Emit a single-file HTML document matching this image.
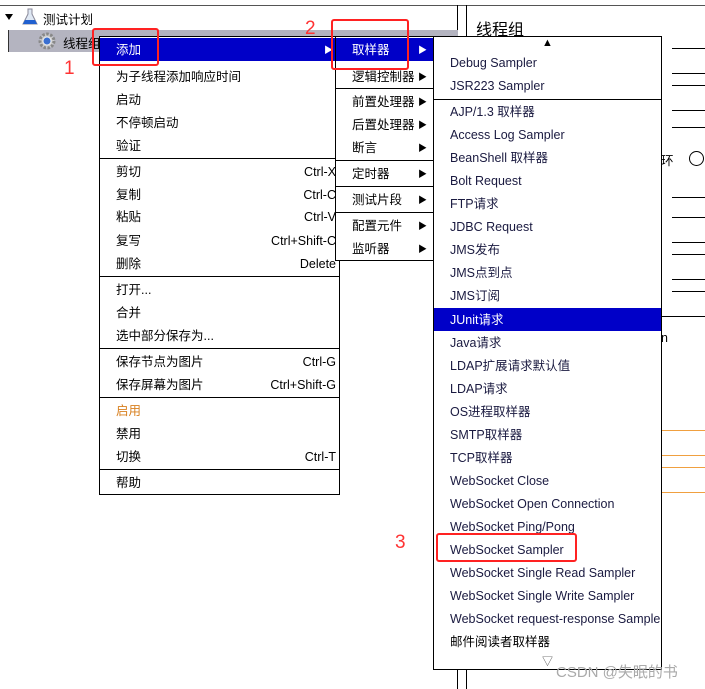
<!DOCTYPE html>
<html><head><meta charset="utf-8"><style>
*{margin:0;padding:0;box-sizing:border-box}
body{width:705px;height:689px;position:relative;overflow:hidden;background:#fff;font-family:"Liberation Sans","Noto Sans CJK SC",sans-serif;font-size:12.5px;color:#000}
.a{position:absolute}
.hl{position:absolute;left:672px;height:1px;background:#000;width:33px}
.ol{position:absolute;left:661px;height:1px;background:#f0a040;width:44px}
.m{position:absolute;background:#fff;border:1px solid #000}
.it{position:absolute;left:0;right:0;height:23px;line-height:24px;white-space:nowrap}
.it .t{position:absolute;left:16px}
.it .k{position:absolute;right:3px}
.it .r{position:absolute;right:6px;font-size:9px}
.sel{background:#0000c8;color:#fff}
.sep{position:absolute;left:0;right:0;height:1px;background:#000}
.rb{position:absolute;border:2px solid #f22;border-radius:3px}
.num{position:absolute;color:#f33;font-size:19px}
.s .t{color:#1a1a40}
</style></head><body>
<div class="a" style="left:0;top:5px;width:705px;height:1px;background:#555"></div>
<div class="a" style="left:457px;top:5px;width:1px;height:684px;background:#000"></div>
<div class="a" style="left:466px;top:5px;width:1px;height:684px;background:#000"></div>
<div class="a" style="left:476px;top:16px;font-size:16px">线程组</div>
<div class="hl" style="top:48px"></div><div class="hl" style="top:73px"></div><div class="hl" style="top:85px"></div><div class="hl" style="top:110px"></div><div class="hl" style="top:127px"></div><div class="hl" style="top:197px"></div><div class="hl" style="top:217px"></div><div class="hl" style="top:242px"></div><div class="hl" style="top:254px"></div><div class="hl" style="top:279px"></div><div class="hl" style="top:291px"></div>
<div class="a" style="left:661px;top:150px">环</div>
<div class="a" style="left:689px;top:151px;width:15px;height:15px;border:1px solid #000;border-radius:50%"></div>
<div class="hl" style="left:661px;top:316px;width:44px"></div>
<div class="a" style="left:661px;top:331px">n</div>
<div class="ol" style="top:430px"></div><div class="ol" style="top:455px"></div><div class="ol" style="top:467px"></div><div class="ol" style="top:492px"></div>
<!-- tree -->
<div class="a" style="left:5px;top:14px;width:0;height:0;border-left:4px solid transparent;border-right:4px solid transparent;border-top:6px solid #000"></div>
<svg class="a" style="left:22px;top:8px" width="16" height="18"><path d="M6 1h4v5l5 10H1l5-10z" fill="#dfe8f4" stroke="#889"/><path d="M3 12h10l2 4H1z" fill="#2060d0"/></svg>
<div class="a" style="left:43px;top:9px">测试计划</div>
<div class="a" style="left:8px;top:30px;width:450px;height:22px;background:#b4b4c0;border-left:1px solid #333"></div>
<svg class="a" style="left:37px;top:31px" width="20" height="20"><circle cx="10" cy="10" r="7" fill="#ccc" stroke="#888" stroke-width="3" stroke-dasharray="2.5 1.5"/><circle cx="10" cy="10" r="4" fill="#3a6fd0" stroke="#eee"/></svg>
<div class="a" style="left:63px;top:33px">线程组</div>
<!-- main menu -->
<div class="m" style="left:99px;top:36px;width:241px;height:459px">
<div class="it sel" style="top:1px"><span class="t">添加</span><span class="r">▶</span></div>
<div class="it" style="top:28px"><span class="t">为子线程添加响应时间</span></div>
<div class="it" style="top:51px"><span class="t">启动</span></div>
<div class="it" style="top:74px"><span class="t">不停顿启动</span></div>
<div class="it" style="top:97px"><span class="t">验证</span></div>
<div class="sep" style="top:121px"></div>
<div class="it" style="top:123px"><span class="t">剪切</span><span class="k">Ctrl-X</span></div>
<div class="it" style="top:146px"><span class="t">复制</span><span class="k">Ctrl-C</span></div>
<div class="it" style="top:168px"><span class="t">粘贴</span><span class="k">Ctrl-V</span></div>
<div class="it" style="top:192px"><span class="t">复写</span><span class="k">Ctrl+Shift-C</span></div>
<div class="it" style="top:215px"><span class="t">删除</span><span class="k">Delete</span></div>
<div class="sep" style="top:239px"></div>
<div class="it" style="top:241px"><span class="t">打开...</span></div>
<div class="it" style="top:264px"><span class="t">合并</span></div>
<div class="it" style="top:287px"><span class="t">选中部分保存为...</span></div>
<div class="sep" style="top:311px"></div>
<div class="it" style="top:313px"><span class="t">保存节点为图片</span><span class="k">Ctrl-G</span></div>
<div class="it" style="top:336px"><span class="t">保存屏幕为图片</span><span class="k">Ctrl+Shift-G</span></div>
<div class="sep" style="top:360px"></div>
<div class="it" style="top:362px"><span class="t" style="color:#d88020">启用</span></div>
<div class="it" style="top:385px"><span class="t">禁用</span></div>
<div class="it" style="top:408px"><span class="t">切换</span><span class="k">Ctrl-T</span></div>
<div class="sep" style="top:432px"></div>
<div class="it" style="top:434px"><span class="t">帮助</span></div>
</div>
<!-- submenu -->
<div class="m" style="left:335px;top:36px;width:99px;height:225px">
<div class="it sel" style="top:1px"><span class="t">取样器</span><span class="r">▶</span></div>
<div class="it" style="top:28px"><span class="t">逻辑控制器</span><span class="r">▶</span></div>
<div class="sep" style="top:51px"></div>
<div class="it" style="top:53px"><span class="t">前置处理器</span><span class="r">▶</span></div>
<div class="it" style="top:76px"><span class="t">后置处理器</span><span class="r">▶</span></div>
<div class="it" style="top:99px"><span class="t">断言</span><span class="r">▶</span></div>
<div class="sep" style="top:123px"></div>
<div class="it" style="top:125px"><span class="t">定时器</span><span class="r">▶</span></div>
<div class="sep" style="top:149px"></div>
<div class="it" style="top:151px"><span class="t">测试片段</span><span class="r">▶</span></div>
<div class="sep" style="top:175px"></div>
<div class="it" style="top:177px"><span class="t">配置元件</span><span class="r">▶</span></div>
<div class="it" style="top:200px"><span class="t">监听器</span><span class="r">▶</span></div>
</div>
<!-- sampler menu -->
<div class="m s" style="left:433px;top:36px;width:229px;height:634px">
<div class="a" style="left:108px;top:0px;font-size:11px">▲</div>
<div class="it" style="top:14px"><span class="t">Debug Sampler</span></div>
<div class="it" style="top:37px"><span class="t">JSR223 Sampler</span></div>
<div class="sep" style="top:62px"></div>
<div class="it" style="top:63px"><span class="t">AJP/1.3 取样器</span></div>
<div class="it" style="top:86px"><span class="t">Access Log Sampler</span></div>
<div class="it" style="top:109px"><span class="t">BeanShell 取样器</span></div>
<div class="it" style="top:132px"><span class="t">Bolt Request</span></div>
<div class="it" style="top:155px"><span class="t">FTP请求</span></div>
<div class="it" style="top:178px"><span class="t">JDBC Request</span></div>
<div class="it" style="top:201px"><span class="t">JMS发布</span></div>
<div class="it" style="top:224px"><span class="t">JMS点到点</span></div>
<div class="it" style="top:247px"><span class="t">JMS订阅</span></div>
<div class="it sel" style="top:271px"><span class="t" style="color:#fff">JUnit请求</span></div>
<div class="it" style="top:294px"><span class="t">Java请求</span></div>
<div class="it" style="top:317px"><span class="t">LDAP扩展请求默认值</span></div>
<div class="it" style="top:340px"><span class="t">LDAP请求</span></div>
<div class="it" style="top:363px"><span class="t">OS进程取样器</span></div>
<div class="it" style="top:386px"><span class="t">SMTP取样器</span></div>
<div class="it" style="top:409px"><span class="t">TCP取样器</span></div>
<div class="it" style="top:432px"><span class="t">WebSocket Close</span></div>
<div class="it" style="top:455px"><span class="t">WebSocket Open Connection</span></div>
<div class="it" style="top:478px"><span class="t">WebSocket Ping/Pong</span></div>
<div class="it" style="top:501px"><span class="t">WebSocket Sampler</span></div>
<div class="it" style="top:524px"><span class="t">WebSocket Single Read Sampler</span></div>
<div class="it" style="top:547px"><span class="t">WebSocket Single Write Sampler</span></div>
<div class="it" style="top:570px;overflow:hidden"><span class="t">WebSocket request-response Sampler</span></div>
<div class="it" style="top:593px"><span class="t" style="color:#000">邮件阅读者取样器</span></div>
<div class="a" style="left:108px;top:616px;font-size:11px;color:#555">▽</div>
</div>
<div class="a" style="left:556px;top:661px;font-size:15px;color:#aaa">CSDN @失眠的书</div>
<!-- annotations -->
<div class="rb" style="left:92px;top:28px;width:67px;height:38px"></div>
<div class="rb" style="left:331px;top:19px;width:78px;height:51px"></div>
<div class="rb" style="left:436px;top:533px;width:141px;height:29px"></div>
<div class="num" style="left:64px;top:58px">1</div>
<div class="num" style="left:305px;top:18px">2</div>
<div class="num" style="left:395px;top:532px">3</div>
</body></html>
